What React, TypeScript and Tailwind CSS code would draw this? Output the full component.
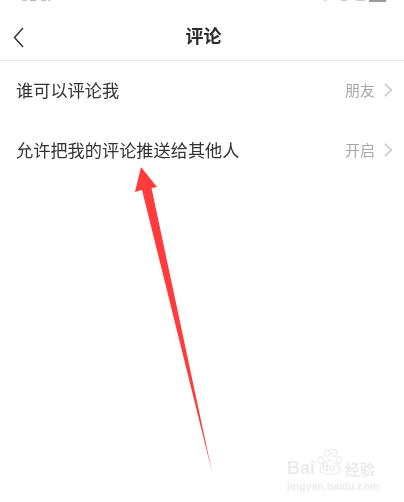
const CJK = "font-['Noto_Sans_CJK_SC','Noto_Sans',sans-serif]";

function Chevron({ className }: { className: string }) {
  return (
    <svg className={className} viewBox="0 0 8 14" fill="none" stroke="currentColor" strokeWidth="1.3">
      <path d="M0.8 0.8 7.2 7 0.8 13.2" />
    </svg>
  );
}

function Row({ label, value }: { label: string; value: string }) {
  return (
    <div className="h-[60px] flex items-center pl-4 pr-[12px] pb-[2px]">
      <span className="flex-1 text-[17.2px] text-[#333333] blur-[0.3px]">{label}</span>
      <span className="text-[15px] text-[#a8a8a8] blur-[0.3px]">{value}</span>
      <Chevron className="ml-[9px] w-[8px] h-[14px] text-[#c4c4c4]" />
    </div>
  );
}

// bottom edge of the cropped status bar, only a sliver of it is in the picture
function StatusSliver() {
  return (
    <div className="h-[2px] flex items-start pl-[22px] pr-[18px] overflow-hidden">
      <div className="w-[5px] h-px bg-[#c8c8c8]" />
      <div className="ml-[3px] w-[6px] h-px bg-[#b4b4b4]" />
      <div className="ml-[5px] w-[5px] h-px bg-[#c0c0c0]" />
      <div className="ml-[2px] w-[3px] h-px bg-[#d0d0d0]" />
      <div className="flex-1" />
      <div className="w-[3px] h-px bg-[#dcdcdc]" />
      <div className="ml-[14px] w-[6px] h-px bg-[#c8c8c8]" />
      <div className="ml-[9px] w-[9px] h-px bg-[#d0d0d0]" />
      <div className="ml-[4px] w-[17px] h-[2px] bg-[#9c9c9c]" />
    </div>
  );
}

function Watermark() {
  return (
    <div className="absolute left-[287px] top-[448px] w-[90px] blur-[0.4px] text-[#ececec]">
      <div className="relative h-[28px]">
        <span className="absolute left-[0px] top-[11px] font-['Liberation_Sans',sans-serif] font-bold text-[18px] leading-[18px]">Bai</span>
        <svg className="absolute left-[30px] top-0 w-[26px] h-[27px]" viewBox="0 0 26 27" fill="none" stroke="currentColor" strokeWidth="1.2">
          <ellipse cx="4" cy="12" rx="2.5" ry="3.5" />
          <ellipse cx="10" cy="5" rx="2.5" ry="3.5" />
          <ellipse cx="17" cy="5" rx="2.5" ry="3.5" />
          <ellipse cx="22" cy="12" rx="2.5" ry="3.5" />
          <path d="M13 12c4 0 10 6 10 10s-5 4-10 4-10 0-10-4 6-10 10-10z" />
        </svg>
        <span className="absolute left-[35px] top-[14px] font-['Liberation_Sans',sans-serif] font-bold text-[11px] leading-[11px]">du</span>
        <span className="absolute left-[58px] top-[13px] text-[15px] font-bold leading-[15px]">经验</span>
      </div>
      <div className="mt-[5px] font-['Liberation_Sans',sans-serif] font-bold text-[10.5px] leading-[10px] whitespace-nowrap">jingyan.baidu.com</div>
    </div>
  );
}

function Arrow() {
  return (
    <svg className="absolute left-0 top-0 w-[404px] h-[502px] pointer-events-none" viewBox="0 0 404 502">
      <path d="M141 167 157 187 151.5 188 212 472 142 190 135 192z" fill="#ff3b3b" />
    </svg>
  );
}

export default function App() {
  return (
    <div className={`relative w-[404px] h-[502px] overflow-hidden bg-white ${CJK}`}>
      <StatusSliver />
      <header className="relative h-[59px] flex items-center justify-center border-b border-[#e8e8e8]">
        <svg className="absolute left-[13px] top-[25px] w-[11px] h-[21px] text-[#333]" viewBox="0 0 11 21" fill="none" stroke="currentColor" strokeWidth="1.5">
          <path d="M10 1 1.5 10.5 10 20" />
        </svg>
        <h1 className="text-[18px] font-bold text-[#2b2b2b] mt-[9px] ml-[3px] blur-[0.3px]">评论</h1>
      </header>
      <Row label="谁可以评论我" value="朋友" />
      <Row label="允许把我的评论推送给其他人" value="开启" />
      <Arrow />
      <Watermark />
    </div>
  );
}
